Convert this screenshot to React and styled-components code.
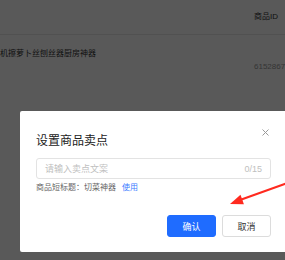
import React from 'react';
import styled, { createGlobalStyle } from 'styled-components';

const GlobalStyle = createGlobalStyle`
  html, body {
    margin: 0;
    padding: 0;
    width: 285px;
    height: 260px;
    overflow: hidden;
    background: #fff;
    font-family: "Liberation Sans", "Noto Sans CJK SC", sans-serif;
  }
`;

const Page = styled.div`
  position: relative;
  width: 285px;
  height: 260px;
  overflow: hidden;
`;

// table behind the dialog
const Table = styled.div`
  display: flex;
  flex-direction: column;
`;

const HeadRow = styled.div`
  display: flex;
  justify-content: flex-end;
  align-items: center;
  height: 34px;
  padding-right: 9px;
  border-bottom: 1px solid #e8e8e8;
  font-size: 8px;
  color: #333;
`;

const HeadCell = styled.div`
  width: 22px;
  margin-top: -3px;
  white-space: nowrap;
`;

const BodyRow = styled.div`
  display: flex;
  justify-content: space-between;
  padding-top: 12px;
`;

const ProductName = styled.div`
  font-size: 8px;
  color: #333;
  white-space: nowrap;
`;

const ProductId = styled.div`
  font-size: 8px;
  color: #999;
  margin-top: 15px;
  width: 31px;
  white-space: nowrap;
`;

const Mask = styled.div`
  position: absolute;
  inset: 0;
  background: rgba(0, 0, 0, 0.65);
`;

const Dialog = styled.div`
  position: absolute;
  top: 111px;
  left: 20px;
  width: 268px;
  height: 141px;
  box-sizing: border-box;
  background: #fff;
  border-radius: 2px;
  padding: 19px 17px 15px 16px;
  display: flex;
  flex-direction: column;
`;

const Close = styled.div`
  position: absolute;
  top: 129px;
  left: 262px;
  width: 7px;
  height: 7px;

  svg {
    display: block;
  }
`;

const Title = styled.div`
  font-size: 12px;
  line-height: 22px;
  color: #222;
`;

const InputBox = styled.div`
  margin-top: 6px;
  height: 21px;
  box-sizing: border-box;
  border: 1px solid #e3e3e3;
  border-radius: 3px;
  display: flex;
  align-items: center;
  justify-content: space-between;
  padding: 0 8px 0 8px;
  font-size: 9px;
  color: #c0c0c0;
`;

const Hint = styled.div`
  margin-top: 3px;
  font-size: 8px;
  line-height: 12px;
  color: #666;
`;

const Use = styled.span`
  color: #3c7bff;
  margin-left: 6px;
`;

const Footer = styled.div`
  margin-top: auto;
  display: flex;
  justify-content: flex-end;
  gap: 6px;
`;

const Button = styled.div`
  width: 49px;
  height: 22px;
  box-sizing: border-box;
  border-radius: 3px;
  display: flex;
  align-items: center;
  justify-content: center;
  font-size: 9px;
  background: ${(p) => (p.$primary ? '#1f6cff' : '#fff')};
  color: ${(p) => (p.$primary ? '#fff' : '#333')};
  border: 1px solid ${(p) => (p.$primary ? '#1f6cff' : '#dcdcdc')};
`;

const Arrow = styled.svg`
  position: absolute;
  left: 0;
  top: 0;
`;

export default function App() {
  return (
    <Page>
      <GlobalStyle />
      <Table>
        <HeadRow>
          <HeadCell>商品ID</HeadCell>
        </HeadRow>
        <BodyRow>
          <ProductName>机擦萝卜丝刨丝器厨房神器</ProductName>
          <ProductId>6152867</ProductId>
        </BodyRow>
      </Table>
      <Mask />
      <Dialog>
        <Title>设置商品卖点</Title>
        <InputBox>
          <span>请输入卖点文案</span>
          <span>0/15</span>
        </InputBox>
        <Hint>
          商品短标题：切菜神器<Use>使用</Use>
        </Hint>
        <Footer>
          <Button $primary>确认</Button>
          <Button>取消</Button>
        </Footer>
      </Dialog>
      <Close>
        <svg width="7" height="7" viewBox="0 0 7 7">
          <path d="M0.5 0.5 L6.5 6.5 M6.5 0.5 L0.5 6.5" stroke="#9a9a9a" strokeWidth="1" />
        </svg>
      </Close>
      <Arrow width="285" height="260" viewBox="0 0 285 260">
        <path d="M286 183.5 L240 200" stroke="#ff2a1f" strokeWidth="2.2" strokeLinecap="round" />
        <path d="M230 204 L240.5 194.8 L243.9 204.2 Z" fill="#ff2a1f" />
      </Arrow>
    </Page>
  );
}
